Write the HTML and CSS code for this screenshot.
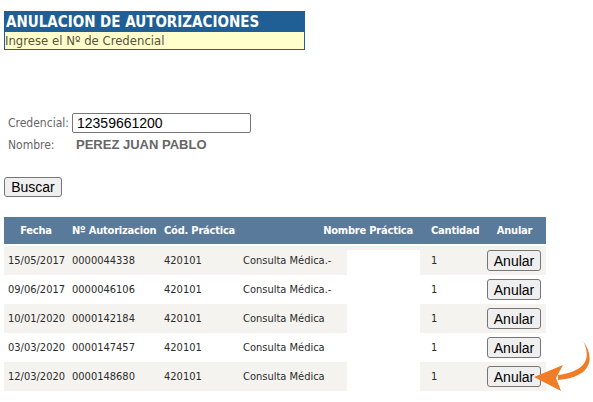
FILE: index.html
```html
<!DOCTYPE html>
<html lang="es">
<head>
<meta charset="utf-8">
<title>Anulacion de autorizaciones</title>
<link rel="stylesheet" href="styles.css">
</head>
<body>
<div class="title-box">
  <div class="title">ANULACION DE AUTORIZACIONES</div>
  <div class="subtitle">Ingrese el Nº de Credencial</div>
</div>

<div class="form">
  <label class="lbl" for="cred">Credencial:</label>
  <input id="cred" class="inp" type="text" value="12359661200">
  <span class="lbl">Nombre:</span>
  <span class="val">PEREZ JUAN PABLO</span>
</div>

<button class="btn buscar" type="button">Buscar</button>

<div class="table-wrap">
<table class="grid">
  <colgroup>
    <col class="c-fecha"><col class="c-aut"><col class="c-cod"><col class="c-nom"><col class="c-blank"><col class="c-cant"><col class="c-anu">
  </colgroup>
  <thead>
    <tr>
      <th class="center">Fecha</th>
      <th class="center">Nº Autorizacion</th>
      <th>Cód. Práctica</th>
      <th colspan="2" class="right">Nombre Práctica</th>
      <th class="cant">Cantidad</th>
      <th class="center">Anular</th>
    </tr>
  </thead>
  <tbody>
    <tr class="odd"><td>15/05/2017</td><td>0000044338</td><td>420101</td><td>Consulta Médica.-</td><td class="blank first"></td><td class="cant">1</td><td><button class="btn anular" type="button">Anular</button></td></tr>
    <tr><td>09/06/2017</td><td>0000046106</td><td>420101</td><td>Consulta Médica.-</td><td class="blank"></td><td class="cant">1</td><td><button class="btn anular" type="button">Anular</button></td></tr>
    <tr class="odd"><td>10/01/2020</td><td>0000142184</td><td>420101</td><td>Consulta Médica</td><td class="blank"></td><td class="cant">1</td><td><button class="btn anular" type="button">Anular</button></td></tr>
    <tr><td>03/03/2020</td><td>0000147457</td><td>420101</td><td>Consulta Médica</td><td class="blank"></td><td class="cant">1</td><td><button class="btn anular" type="button">Anular</button></td></tr>
    <tr class="odd"><td>12/03/2020</td><td>0000148680</td><td>420101</td><td>Consulta Médica</td><td class="blank"></td><td class="cant">1</td><td><button class="btn anular" type="button">Anular</button></td></tr>
  </tbody>
</table>
<svg class="arrow" width="70" height="60" viewBox="530 338 70 60" aria-hidden="true">
  <path d="M583,342 C591,357 588,372 558,376 L558,381 C593,378 595,358 583,342 Z" fill="#f07d26"/>
  <path d="M534,378 L563,366 L556,379 L561,392 Z" fill="#f07d26"/>
</svg>
</div>
</body>
</html>
```
FILE: styles.css
```css
html, body {
  margin: 0;
  background: #fff;
}
body {
  padding: 11px 4px 0 4px;
  font-family: "DejaVu Sans Condensed", "DejaVu Sans", sans-serif;
  font-size: 11px;
  color: #2b2b2b;
}
.title-box {
  width: 299px;
  border: 1px solid #1f5f95;
}
.title {
  background: #1f5f95;
  color: #fff;
  font-weight: bold;
  font-size: 15px;
  line-height: 20px;
  height: 20px;
  padding-left: 1px;
}
.subtitle {
  background: #ffffcc;
  color: #5b5040;
  font-size: 13px;
  line-height: 17px;
  height: 17px;
  padding-left: 0;
}
.form {
  margin-top: 63px;
  display: grid;
  grid-template-columns: 68px auto;
  row-gap: 4px;
  align-items: center;
}
.lbl {
  padding-left: 4px;
  font-size: 12px;
  color: #666;
}
.inp {
  width: 179px;
  height: 20px;
  box-sizing: border-box;
  border: 1px solid #767676;
  border-radius: 2px;
  padding: 0 4px;
  font-family: "Liberation Sans", Arial, sans-serif;
  font-size: 14px;
  color: #000;
  margin: 0;
  justify-self: start;
}
.val {
  padding-left: 4px;
  font-family: "Liberation Sans", Arial, sans-serif;
  font-weight: bold;
  font-size: 13px;
  color: #666;
  line-height: 16px;
}
.btn {
  font-family: "Liberation Sans", Arial, sans-serif;
  font-size: 14px;
  color: #000;
  background: #efefef;
  border: 1px solid #767676;
  border-radius: 3px;
  padding: 0;
  margin: 0;
  box-sizing: border-box;
}
.buscar {
  display: block;
  margin-top: 24px;
  width: 58px;
  height: 20px;
}
.table-wrap {
  position: relative;
  margin-top: 20px;
  width: 542px;
}
.grid {
  border-collapse: collapse;
  table-layout: fixed;
  width: 542px;
}
.c-fecha { width: 64px; }
.c-aut { width: 92px; }
.c-cod { width: 79px; }
.c-nom { width: 108px; }
.c-blank { width: 73px; }
.c-cant { width: 63px; }
.c-anu { width: 63px; }
.grid th {
  background: #5a7a9b;
  color: #fff;
  font-weight: bold;
  height: 27px;
  padding: 0 4px;
  text-align: left;
  border-bottom: 2px solid #fff;
  white-space: nowrap;
  letter-spacing: -0.2px;
}
.grid th.center { text-align: center; }
.grid th.right { text-align: right; padding-right: 7px; }
.grid td {
  height: 29px;
  padding: 0 4px;
  white-space: nowrap;
}
.grid tr.odd td { background: #f4f3ef; }
.grid td.blank,
.grid tr.odd td.blank { background: #fff; }
.grid td.blank.first { box-shadow: inset 0 4px 0 #f4f3ef; }
.grid .cant { padding-left: 11px; }
.anular {
  width: 54px;
  height: 21px;
  display: block;
}
.arrow {
  position: absolute;
  left: 526px;
  top: 120px;
}
```
